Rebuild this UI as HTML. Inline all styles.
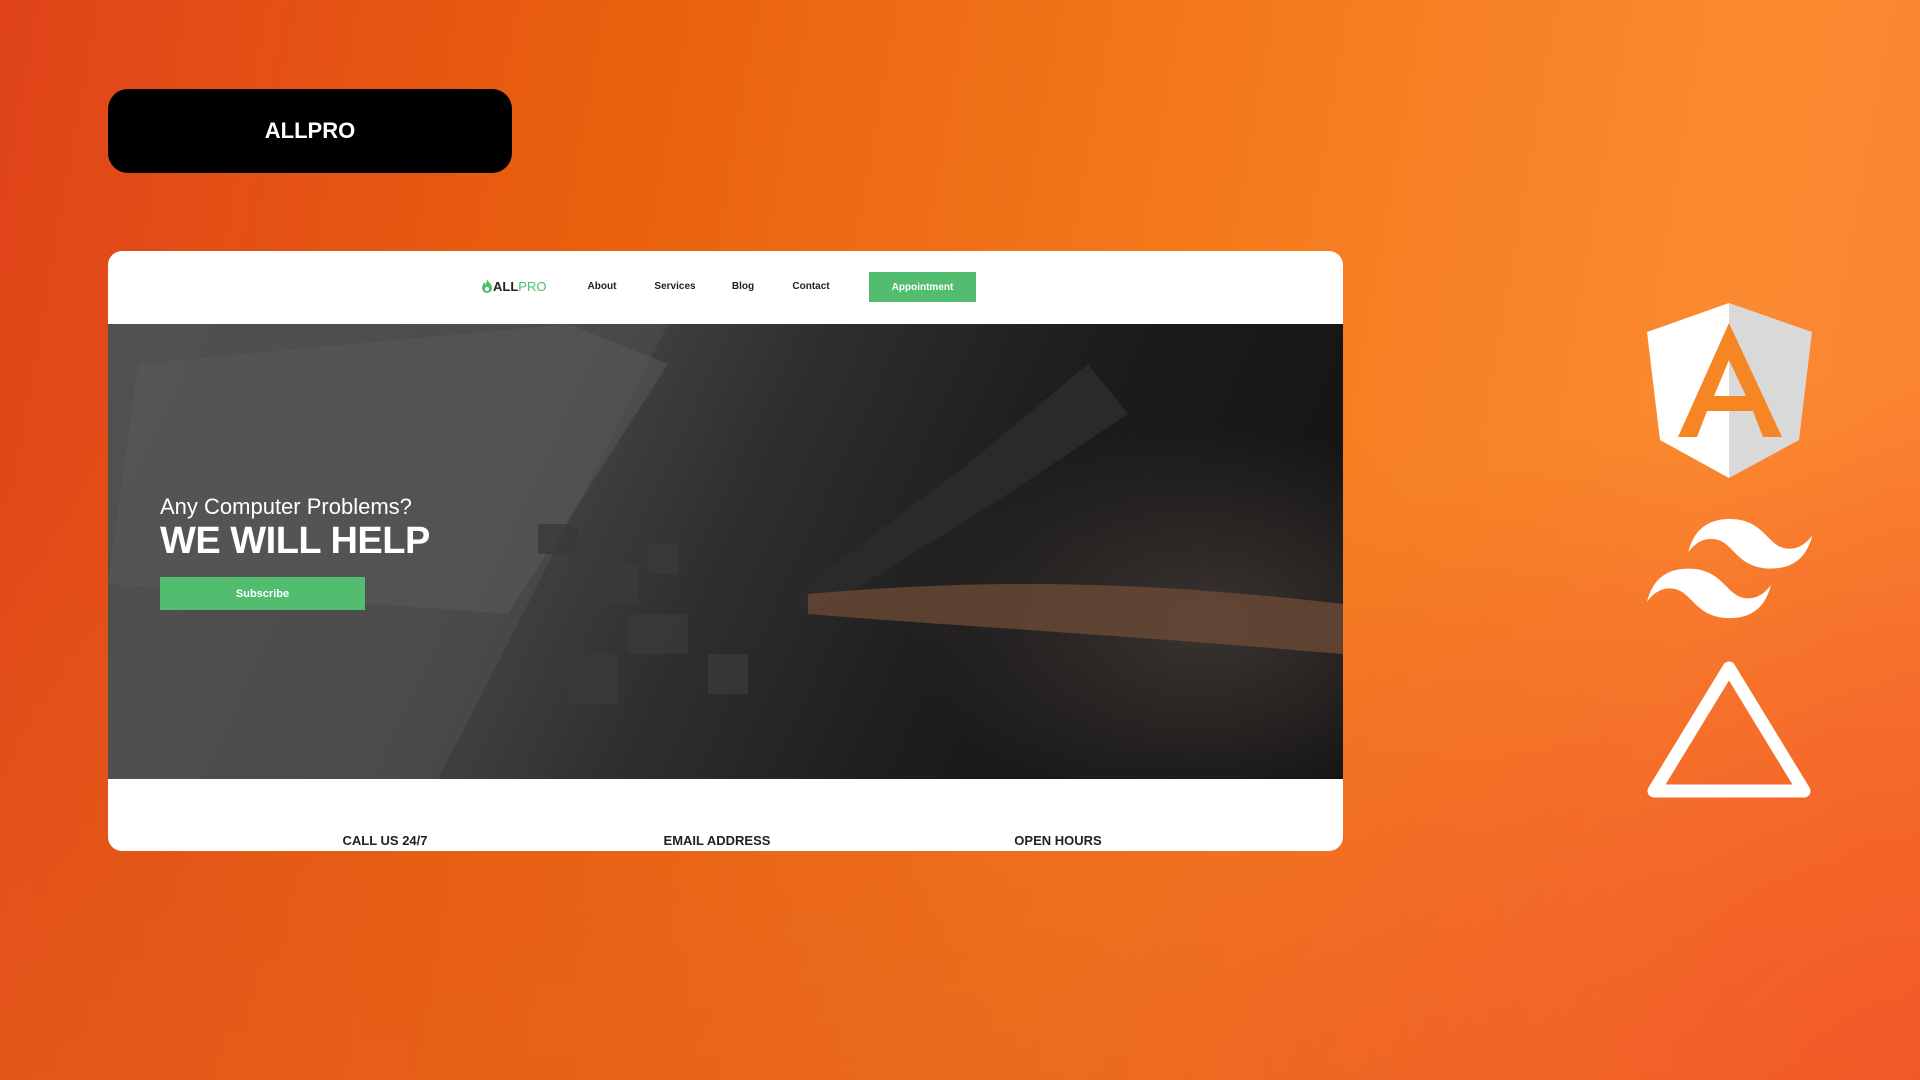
<!DOCTYPE html>
<html><head><meta charset="utf-8"><style>
*{margin:0;padding:0;box-sizing:border-box}
body{width:1920px;height:1080px;overflow:hidden;position:relative;font-family:"Liberation Sans",sans-serif;
background:linear-gradient(100deg,#e0431a 0%,#e9600e 30%,#f47b1c 60%,#fb8a30 85%,#fb8030 100%)}
.bl{position:absolute;left:0;right:0;top:0;bottom:0;background:linear-gradient(180deg,rgba(230,90,30,0) 40%,rgba(228,95,30,.55) 100%)}
.br{position:absolute;left:0;right:0;top:0;bottom:0;background:radial-gradient(ellipse 900px 700px at 1920px 1080px,rgba(245,80,40,.7),rgba(245,80,40,0))}
.pill{position:absolute;left:108px;top:89px;width:404px;height:84px;background:#000;border-radius:20px;color:#fff;font-weight:bold;font-size:22px;display:flex;align-items:center;justify-content:center}
.card{position:absolute;left:108px;top:251px;width:1235px;height:600px;background:#fff;border-radius:14px;overflow:hidden}
.nav{position:absolute;top:0;left:0;right:0;height:73px}
.nav span{position:absolute;top:30px;font-size:10px;font-weight:bold;color:#222;transform:translateX(-50%)}
.logo{position:absolute;left:373px;top:28px;font-size:13px;font-weight:bold;color:#222}
.logo b{color:#52bd6e;font-weight:normal}
.appt{position:absolute;left:761px;top:21px;width:107px;height:30px;background:#52bd6e;color:#fff;font-size:10px;font-weight:bold;display:flex;align-items:center;justify-content:center}
.hero{position:absolute;top:73px;left:0;width:1235px;height:455px;overflow:hidden;
background:radial-gradient(ellipse 300px 200px at 1100px 300px,#3a3330,transparent),linear-gradient(115deg,#555 0%,#4a4a4a 30%,#2e2e2e 50%,#1c1c1c 70%,#121212 100%)}
.h1{position:absolute;left:52px;top:170px;color:#fff;font-size:22px;font-weight:300}
.h2{position:absolute;left:52px;top:196px;color:#fff;font-size:38px;font-weight:bold;letter-spacing:-.5px}
.sub{position:absolute;left:52px;top:253px;width:205px;height:33px;background:#52bd6e;color:#fff;font-size:11px;font-weight:bold;display:flex;align-items:center;justify-content:center}
.lab{position:absolute;top:582px;font-size:13px;font-weight:bold;color:#222;transform:translateX(-50%)}
</style></head><body>
<div class="bl"></div><div class="br"></div>
<div class="pill">ALLPRO</div>
<div class="card">
 <div class="nav">
  <div class="logo"><svg width="12" height="14" viewBox="0 0 12 14" style="vertical-align:-2px"><path d="M6 0C7 3 11 5 11 9a5 5 0 0 1-10 0C1 6 3 5 3 3c1 1 2 2 2 3C5 4 6 2 6 0z" fill="#52bd6e"/><circle cx="6" cy="10" r="2" fill="#fff"/></svg>ALL<b>PRO</b></div>
  <span style="left:494px">About</span>
  <span style="left:567px">Services</span>
  <span style="left:635px">Blog</span>
  <span style="left:703px">Contact</span>
  <div class="appt">Appointment</div>
 </div>
 <div class="hero">
  <svg width="1235" height="455" style="position:absolute;left:0;top:0">
   <polygon points="0,0 560,0 420,280 330,455 0,455" fill="#4e4e4e" opacity=".6"/>
   <polygon points="30,40 460,0 560,40 400,290 0,260" fill="#5a5a5a" opacity=".5"/>
   <g fill="#3a3a3a" opacity=".8">
    <rect x="430" y="200" width="40" height="30"/><rect x="480" y="240" width="50" height="40"/><rect x="540" y="220" width="30" height="30"/>
    <rect x="520" y="290" width="60" height="40"/><rect x="600" y="330" width="40" height="40"/><rect x="460" y="330" width="50" height="50"/>
   </g>
   <path d="M980 40 L860 140 L700 260 L680 290 L740 270 L900 170 L1020 90 Z" fill="#2a2a2a"/>
   <path d="M700 270 C820 260 980 250 1235 280 L1235 330 C1000 310 820 300 700 290 Z" fill="#6b4a36" opacity=".8"/>
  </svg>
  <div class="h1">Any Computer Problems?</div>
  <div class="h2">WE WILL HELP</div>
  <div class="sub">Subscribe</div>
 </div>
 <div class="lab" style="left:277px">CALL US 24/7</div>
 <div class="lab" style="left:609px">EMAIL ADDRESS</div>
 <div class="lab" style="left:950px">OPEN HOURS</div>
</div>
<svg width="220" height="520" style="position:absolute;left:1620px;top:290px" viewBox="0 0 220 520">
 <polygon points="109,13 27,42 40,150 109,188" fill="#fff"/>
 <polygon points="109,13 192,42 179,150 109,188" fill="#d9d9d9"/>
 <path fill-rule="evenodd" fill="#f68524" d="M109,33 L58,147 L77,147 L87,121 L133,121 L143,147 L162,147 Z M109,70 L94,106 L126,106 Z"/>
 <g transform="translate(27,229) scale(3.06)"><path fill="#fff" d="M27 0c-7.2 0-11.7 3.6-13.5 10.8 2.7-3.6 5.85-4.95 9.450-4.05 2.054.513 3.522 2.004 5.147 3.653C30.744 13.09 33.808 16.2 40.5 16.2c7.2 0 11.7-3.6 13.5-10.8-2.7 3.6-5.850 4.95-9.45 4.05-2.054-.513-3.522-2.004-5.147-3.653C36.756 3.11 33.692 0 27 0zM13.5 16.2C6.3 16.2 1.8 19.8 0 27c2.7-3.6 5.85-4.95 9.45-4.05 2.054.514 3.522 2.004 5.147 3.653C17.244 29.29 20.308 32.4 27 32.4c7.2 0 11.7-3.6 13.5-10.8-2.7 3.6-5.85 4.95-9.45 4.05-2.054-.513-3.522-2.004-5.147-3.653C23.256 19.310 20.192 16.2 13.5 16.2z"/></g>
 <polygon points="109,378 34,501 184,501" fill="none" stroke="#fff" stroke-width="13" stroke-linejoin="round"/>
</svg>
</body></html>
